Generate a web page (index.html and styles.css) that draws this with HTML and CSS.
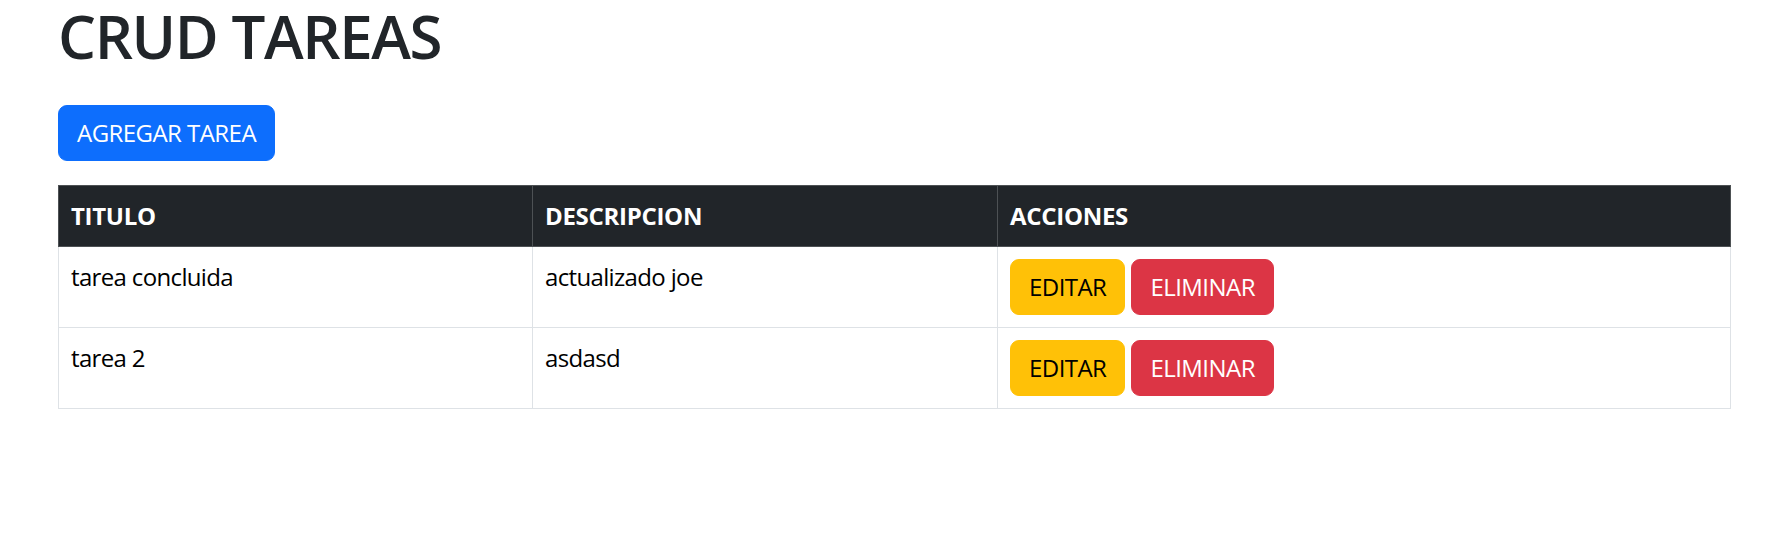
FILE: index.html
```html
<!DOCTYPE html>
<html lang="es">
<head>
<meta charset="utf-8">
<title>CRUD TAREAS</title>
<link rel="stylesheet" href="styles.css">
</head>
<body>
<main class="page">
  <h1 class="title">CRUD TAREAS</h1>
  <button class="btn btn-primary">AGREGAR TAREA</button>
  <table class="tasks">
    <colgroup>
      <col class="col-titulo">
      <col class="col-desc">
      <col class="col-acc">
    </colgroup>
    <thead>
      <tr>
        <th>TITULO</th>
        <th>DESCRIPCION</th>
        <th>ACCIONES</th>
      </tr>
    </thead>
    <tbody>
      <tr>
        <td>tarea concluida</td>
        <td>actualizado joe</td>
        <td>
          <div class="actions">
            <button class="btn btn-warning">EDITAR</button>
            <button class="btn btn-danger">ELIMINAR</button>
          </div>
        </td>
      </tr>
      <tr>
        <td>tarea 2</td>
        <td>asdasd</td>
        <td>
          <div class="actions">
            <button class="btn btn-warning">EDITAR</button>
            <button class="btn btn-danger">ELIMINAR</button>
          </div>
        </td>
      </tr>
    </tbody>
  </table>
</main>
</body>
</html>
```

FILE: styles.css
```css
* { box-sizing: border-box; }

body {
  margin: 0;
  background: #fff;
  color: #212529;
  font-family: "Open Sans", "Noto Sans", "Liberation Sans", sans-serif;
  font-size: 24px;
  line-height: 36px;
}

.page {
  padding: 0 48px 0 58px;
  display: flex;
  flex-direction: column;
  align-items: flex-start;
}

.title {
  margin: 0 0 33px;
  font-size: 60px;
  line-height: 72px;
  font-weight: 600;
  color: #212529;
  letter-spacing: -1.4px;
}

.btn {
  font-family: inherit;
  font-size: 24px;
  line-height: 36px;
  padding: 9px 18px;
  border: 1px solid transparent;
  border-radius: 9px;
  cursor: pointer;
  letter-spacing: -0.55px;
}

.btn-primary { background: #0d6efd; border-color: #0d6efd; color: #fff; }
.btn-warning { background: #ffc107; border-color: #ffc107; color: #000; }
.btn-danger  { background: #dc3545; border-color: #dc3545; color: #fff; }

.tasks {
  margin-top: 24px;
  width: 100%;
  border-collapse: collapse;
  table-layout: fixed;
}

.col-titulo { width: 474px; }
.col-desc { width: 465px; }
.col-acc { width: auto; }

.tasks th,
.tasks td {
  padding: 12px;
  text-align: left;
  vertical-align: top;
}

.tasks th {
  background: #212529;
  color: #fff;
  font-weight: 700;
  border: 1px solid #4d5154;
  letter-spacing: -0.3px;
}

.tasks td {
  color: #000;
  border: 1px solid #dee2e6;
  letter-spacing: -0.65px;
}

.tasks td .btn {
  letter-spacing: -0.55px;
}

.actions {
  display: flex;
  gap: 6px;
}
```
